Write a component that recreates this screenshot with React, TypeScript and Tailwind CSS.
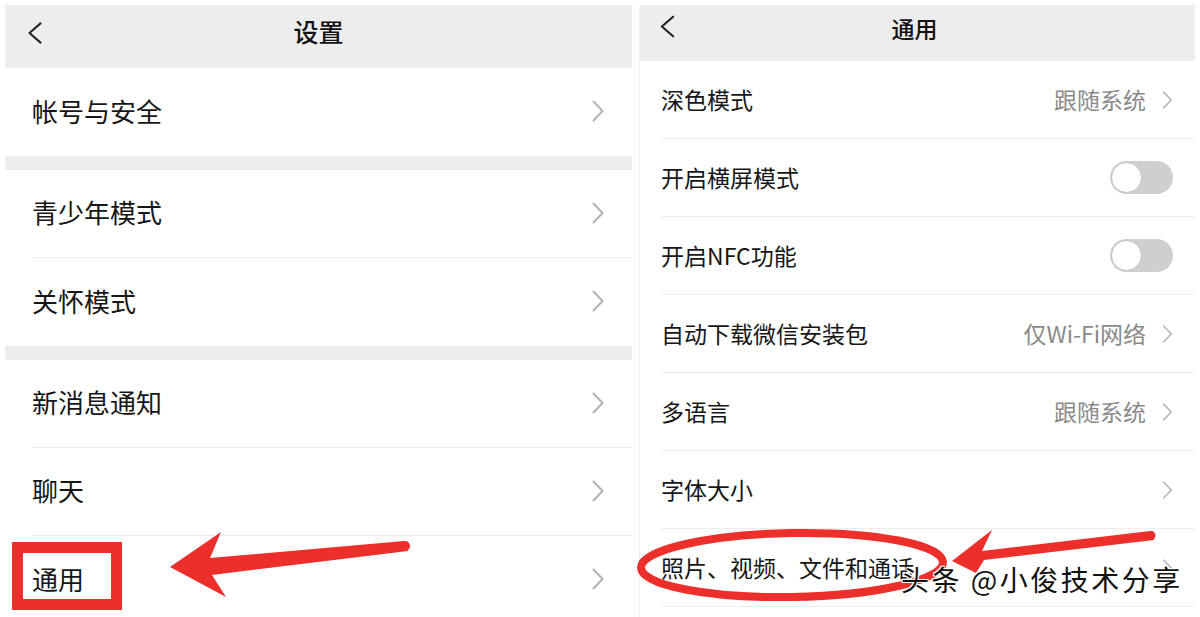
import React from "react";

const FONT = { fontFamily: '"Noto Sans CJK SC", "Noto Sans", sans-serif' };

function Chevron({ className = "" }: { className?: string }) {
  return (
    <svg viewBox="0 0 12 22" className={className} fill="none">
      <polyline points="1.5,1.5 10.5,11 1.5,20.5" stroke="#b3b3b3" strokeWidth="2" strokeLinecap="round" strokeLinejoin="round" />
    </svg>
  );
}

function Back({ className = "" }: { className?: string }) {
  return (
    <svg viewBox="0 0 16 24" className={className} fill="none">
      <polyline points="14,1.5 2,12 14,22.5" stroke="#222" strokeWidth="2.2" strokeLinecap="round" strokeLinejoin="round" />
    </svg>
  );
}

function Toggle() {
  return (
    <div className="w-[63px] h-[33px] rounded-full bg-[#cfcfcf] p-[1px] flex items-center">
      <div className="w-[31px] h-[31px] rounded-full bg-white border border-[#c4c4c4]" />
    </div>
  );
}

function LeftRow({ label, last = false }: { label: string; last?: boolean }) {
  return (
    <div className="h-[88px] shrink-0 pl-[27px] bg-white">
      <div className={`h-full flex items-center pr-[28px] ${last ? "" : "border-b border-[#ececec]"}`}>
        <span className="flex-1 text-[26px] text-[#161616] -mt-[4px]">{label}</span>
        <Chevron className="w-[12px] h-[22px] -mt-[2px]" />
      </div>
    </div>
  );
}

function RightRow({ label, value, toggle = false }: { label: string; value?: string; toggle?: boolean }) {
  return (
    <div className="h-[78px] shrink-0 pl-[21px] bg-white">
      <div className="h-full flex items-center pr-[22px] border-b border-[#ededed]">
        <span className="flex-1 text-[23px] text-[#161616]">{label}</span>
        {toggle ? (
          <Toggle />
        ) : (
          <div className="flex items-center gap-[16px]">
            {value && <span className="text-[23px] text-[#8a8a8a]">{value}</span>}
            <Chevron className="w-[11px] h-[18px]" />
          </div>
        )}
      </div>
    </div>
  );
}

export default function App() {
  return (
    <div style={FONT} className="relative w-[1200px] h-[617px] overflow-hidden bg-white flex gap-[7px] pl-[5px] pt-[5px]">
      {/* 设置 */}
      <div className="w-[627px] flex flex-col bg-[#ededed]">
        <div className="h-[63px] shrink-0 relative flex items-center justify-center">
          <Back className="absolute left-[22px] top-[17px] w-[16px] h-[22px]" />
          <span className="text-[25px] font-medium text-[#111] -mt-[9px]">设置</span>
        </div>
        <LeftRow label="帐号与安全" last />
        <div className="h-[14px] shrink-0" />
        <LeftRow label="青少年模式" />
        <LeftRow label="关怀模式" last />
        <div className="h-[14px] shrink-0" />
        <LeftRow label="新消息通知" />
        <LeftRow label="聊天" />
        <LeftRow label="通用" last />
      </div>

      {/* 通用 */}
      <div className="w-[556px] flex flex-col bg-white border-l border-[#f0f0f0]">
        <div className="h-[56px] shrink-0 bg-[#ededed] relative flex items-center justify-center">
          <Back className="absolute left-[20px] top-[10px] w-[15px] h-[23px]" />
          <span className="text-[23px] font-medium text-[#111] -ml-[6px] -mt-[10px]">通用</span>
        </div>
        <RightRow label="深色模式" value="跟随系统" />
        <RightRow label="开启横屏模式" toggle />
        <RightRow label="开启NFC功能" toggle />
        <RightRow label="自动下载微信安装包" value="仅Wi-Fi网络" />
        <RightRow label="多语言" value="跟随系统" />
        <RightRow label="字体大小" />
        <RightRow label="照片、视频、文件和通话" />
        <RightRow label="" />
      </div>

      {/* red annotations */}
      <svg className="absolute inset-0 pointer-events-none" width="1200" height="617" viewBox="0 0 1200 617">
        <rect x="17.5" y="547.5" width="99" height="57" fill="none" stroke="#ec2f2b" strokeWidth="11" />
        <polygon points="170,567 221,532 210,558 404,541 408,551 212,575 226,597" fill="#ec2f2b" />
        <circle cx="405" cy="546" r="5" fill="#ec2f2b" />
        <ellipse cx="792" cy="565" rx="151" ry="32" fill="none" stroke="#ec2f2b" strokeWidth="8" transform="rotate(-1 792 565)" />
        <polygon points="952,561 992,530 982,551 1150,531 1154,540 984,560 976,573" fill="#ec2f2b" />
        <circle cx="1151" cy="535.5" r="4.5" fill="#ec2f2b" />
      </svg>

      {/* watermark */}
      <div className="absolute left-[901px] top-[561px] text-[28px] leading-[36px] tracking-[2.5px] text-[#111] [text-shadow:1px_1px_0_#fff,-1px_-1px_0_#fff,1px_-1px_0_#fff,-1px_1px_0_#fff]">
        头条 @小俊技术分享
      </div>
    </div>
  );
}
